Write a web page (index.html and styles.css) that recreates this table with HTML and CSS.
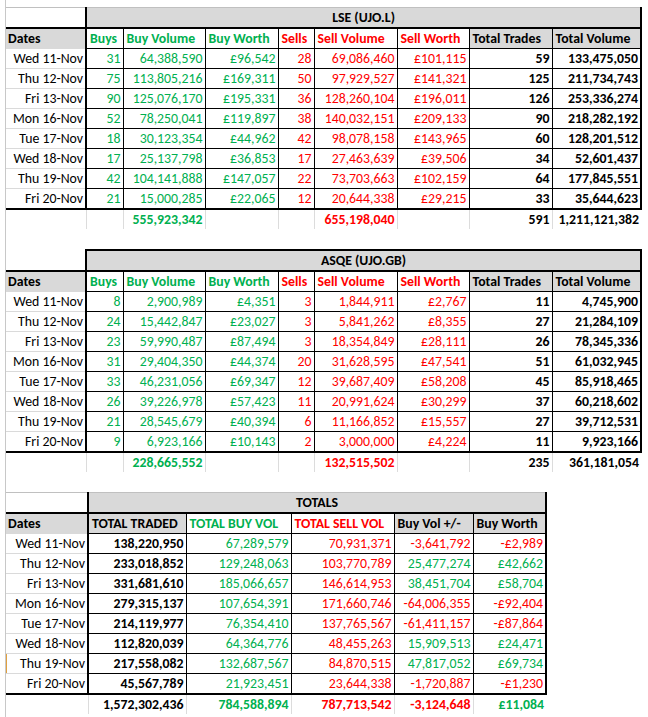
FILE: index.html
```html
<!DOCTYPE html>
<html lang="en">
<head>
    <meta charset="UTF-8">
    <title>UJO trades</title>
    <link rel="stylesheet" href="styles.css">
</head>
<body>
<div class="sheet">

    <table class="grid market light-top">
        <colgroup>
            <col class="c-date"><col class="c-buys"><col class="c-bvol"><col class="c-bworth"><col class="c-sells">
            <col class="c-svol"><col class="c-sworth"><col class="c-trades"><col class="c-tvol">
        </colgroup>
        <tr class="title"><td class="corner"></td><th colspan="8">LSE (UJO.L)</th></tr>
        <tr class="head">
            <th class="date-head">Dates</th><th class="g first">Buys</th><th class="g">Buy Volume</th><th class="g">Buy Worth</th>
            <th class="r">Sells</th><th class="r">Sell Volume</th><th class="r">Sell Worth</th><th class="grey">Total Trades</th><th class="grey last">Total Volume</th>
        </tr>
        <tr><td class="date">Wed 11-Nov</td><td class="g first">31</td><td class="g">64,388,590</td><td class="g">£96,542</td><td class="r">28</td><td class="r">69,086,460</td><td class="r">£101,115</td><td class="b">59</td><td class="b last">133,475,050</td></tr>
        <tr><td class="date">Thu 12-Nov</td><td class="g first">75</td><td class="g">113,805,216</td><td class="g">£169,311</td><td class="r">50</td><td class="r">97,929,527</td><td class="r">£141,321</td><td class="b">125</td><td class="b last">211,734,743</td></tr>
        <tr><td class="date">Fri 13-Nov</td><td class="g first">90</td><td class="g">125,076,170</td><td class="g">£195,331</td><td class="r">36</td><td class="r">128,260,104</td><td class="r">£196,011</td><td class="b">126</td><td class="b last">253,336,274</td></tr>
        <tr><td class="date">Mon 16-Nov</td><td class="g first">52</td><td class="g">78,250,041</td><td class="g">£119,897</td><td class="r">38</td><td class="r">140,032,151</td><td class="r">£209,133</td><td class="b">90</td><td class="b last">218,282,192</td></tr>
        <tr><td class="date">Tue 17-Nov</td><td class="g first">18</td><td class="g">30,123,354</td><td class="g">£44,962</td><td class="r">42</td><td class="r">98,078,158</td><td class="r">£143,965</td><td class="b">60</td><td class="b last">128,201,512</td></tr>
        <tr><td class="date">Wed 18-Nov</td><td class="g first">17</td><td class="g">25,137,798</td><td class="g">£36,853</td><td class="r">17</td><td class="r">27,463,639</td><td class="r">£39,506</td><td class="b">34</td><td class="b last">52,601,437</td></tr>
        <tr><td class="date">Thu 19-Nov</td><td class="g first">42</td><td class="g">104,141,888</td><td class="g">£147,057</td><td class="r">22</td><td class="r">73,703,663</td><td class="r">£102,159</td><td class="b">64</td><td class="b last">177,845,551</td></tr>
        <tr class="end"><td class="date">Fri 20-Nov</td><td class="g first">21</td><td class="g">15,000,285</td><td class="g">£22,065</td><td class="r">12</td><td class="r">20,644,338</td><td class="r">£29,215</td><td class="b">33</td><td class="b last">35,644,623</td></tr>
        <tr class="sum"><td></td><td></td><td class="g">555,923,342</td><td></td><td></td><td class="r">655,198,040</td><td></td><td>591</td><td>1,211,121,382</td></tr>
    </table>

    <table class="grid market">
        <colgroup>
            <col class="c-date"><col class="c-buys"><col class="c-bvol"><col class="c-bworth"><col class="c-sells">
            <col class="c-svol"><col class="c-sworth"><col class="c-trades"><col class="c-tvol">
        </colgroup>
        <tr class="title"><td class="corner"></td><th colspan="8">ASQE (UJO.GB)</th></tr>
        <tr class="head">
            <th class="date-head">Dates</th><th class="g first">Buys</th><th class="g">Buy Volume</th><th class="g">Buy Worth</th>
            <th class="r">Sells</th><th class="r">Sell Volume</th><th class="r">Sell Worth</th><th class="grey">Total Trades</th><th class="grey last">Total Volume</th>
        </tr>
        <tr><td class="date">Wed 11-Nov</td><td class="g first">8</td><td class="g">2,900,989</td><td class="g">£4,351</td><td class="r">3</td><td class="r">1,844,911</td><td class="r">£2,767</td><td class="b">11</td><td class="b last">4,745,900</td></tr>
        <tr><td class="date">Thu 12-Nov</td><td class="g first">24</td><td class="g">15,442,847</td><td class="g">£23,027</td><td class="r">3</td><td class="r">5,841,262</td><td class="r">£8,355</td><td class="b">27</td><td class="b last">21,284,109</td></tr>
        <tr><td class="date">Fri 13-Nov</td><td class="g first">23</td><td class="g">59,990,487</td><td class="g">£87,494</td><td class="r">3</td><td class="r">18,354,849</td><td class="r">£28,111</td><td class="b">26</td><td class="b last">78,345,336</td></tr>
        <tr><td class="date">Mon 16-Nov</td><td class="g first">31</td><td class="g">29,404,350</td><td class="g">£44,374</td><td class="r">20</td><td class="r">31,628,595</td><td class="r">£47,541</td><td class="b">51</td><td class="b last">61,032,945</td></tr>
        <tr><td class="date">Tue 17-Nov</td><td class="g first">33</td><td class="g">46,231,056</td><td class="g">£69,347</td><td class="r">12</td><td class="r">39,687,409</td><td class="r">£58,208</td><td class="b">45</td><td class="b last">85,918,465</td></tr>
        <tr><td class="date">Wed 18-Nov</td><td class="g first">26</td><td class="g">39,226,978</td><td class="g">£57,423</td><td class="r">11</td><td class="r">20,991,624</td><td class="r">£30,299</td><td class="b">37</td><td class="b last">60,218,602</td></tr>
        <tr><td class="date">Thu 19-Nov</td><td class="g first">21</td><td class="g">28,545,679</td><td class="g">£40,394</td><td class="r">6</td><td class="r">11,166,852</td><td class="r">£15,557</td><td class="b">27</td><td class="b last">39,712,531</td></tr>
        <tr class="end"><td class="date">Fri 20-Nov</td><td class="g first">9</td><td class="g">6,923,166</td><td class="g">£10,143</td><td class="r">2</td><td class="r">3,000,000</td><td class="r">£4,224</td><td class="b">11</td><td class="b last">9,923,166</td></tr>
        <tr class="sum"><td></td><td></td><td class="g">228,665,552</td><td></td><td></td><td class="r">132,515,502</td><td></td><td>235</td><td>361,181,054</td></tr>
    </table>

    <table class="grid totals light-top">
        <colgroup>
            <col class="t-date"><col class="t-traded"><col class="t-buy"><col class="t-sell"><col class="t-diff"><col class="t-worth">
        </colgroup>
        <tr class="title"><td class="corner"></td><th colspan="5">TOTALS</th></tr>
        <tr class="head">
            <th class="date-head">Dates</th><th class="grey first">TOTAL TRADED</th><th class="g">TOTAL BUY VOL</th><th class="r">TOTAL SELL VOL</th><th class="grey">Buy Vol +/-</th><th class="grey last">Buy Worth</th>
        </tr>
        <tr><td class="date">Wed 11-Nov</td><td class="b first">138,220,950</td><td class="g">67,289,579</td><td class="r">70,931,371</td><td class="r">-3,641,792</td><td class="r last">-£2,989</td></tr>
        <tr><td class="date">Thu 12-Nov</td><td class="b first">233,018,852</td><td class="g">129,248,063</td><td class="r">103,770,789</td><td class="g">25,477,274</td><td class="g last">£42,662</td></tr>
        <tr><td class="date">Fri 13-Nov</td><td class="b first">331,681,610</td><td class="g">185,066,657</td><td class="r">146,614,953</td><td class="g">38,451,704</td><td class="g last">£58,704</td></tr>
        <tr><td class="date">Mon 16-Nov</td><td class="b first">279,315,137</td><td class="g">107,654,391</td><td class="r">171,660,746</td><td class="r">-64,006,355</td><td class="r last">-£92,404</td></tr>
        <tr><td class="date">Tue 17-Nov</td><td class="b first">214,119,977</td><td class="g">76,354,410</td><td class="r">137,765,567</td><td class="r">-61,411,157</td><td class="r last">-£87,864</td></tr>
        <tr><td class="date">Wed 18-Nov</td><td class="b first">112,820,039</td><td class="g">64,364,776</td><td class="r">48,455,263</td><td class="g">15,909,513</td><td class="g last">£24,471</td></tr>
        <tr><td class="date picked">Thu 19-Nov</td><td class="b first">217,558,082</td><td class="g">132,687,567</td><td class="r">84,870,515</td><td class="g">47,817,052</td><td class="g last">£69,734</td></tr>
        <tr class="end"><td class="date">Fri 20-Nov</td><td class="b first">45,567,789</td><td class="g">21,923,451</td><td class="r">23,644,338</td><td class="r">-1,720,887</td><td class="r last">-£1,230</td></tr>
        <tr class="sum"><td></td><td>1,572,302,436</td><td class="g">784,588,894</td><td class="r">787,713,542</td><td class="r">-3,124,648</td><td class="g">£11,084</td></tr>
    </table>

</div>
</body>
</html>
```

FILE: styles.css
```css
body {
    margin: 0;
    background: #fff;
    font-family: Calibri, Carlito, Lato, "Liberation Sans", sans-serif;
    font-size: 13.8px;
    color: #000;
}

.sheet {
    margin-left: 5px;
    padding-top: 7px;
    height: 710px;
    border-left: 1px solid #c8c8c8;
    display: flex;
    flex-direction: column;
    gap: 20px;
}

.grid {
    border-collapse: collapse;
    table-layout: fixed;
}
.market { width: 635px; }
.totals { width: 540px; }

.c-date { width: 80px; }
.c-buys { width: 37px; }
.c-bvol { width: 82px; }
.c-bworth { width: 73px; }
.c-sells { width: 36px; }
.c-svol { width: 83px; }
.c-sworth { width: 72px; }
.c-trades { width: 83px; }
.c-tvol { width: 89px; }

.t-date { width: 82px; }
.t-traded { width: 98px; }
.t-buy { width: 105px; }
.t-sell { width: 103px; }
.t-diff { width: 79px; }
.t-worth { width: 73px; }

.grid td, .grid th {
    height: 18px;
    padding: 1px 2px 0 2px;
    line-height: 18px;
    border: 1px solid #000;
    white-space: nowrap;
    overflow: hidden;
    text-align: right;
    font-weight: normal;
    vertical-align: bottom;
}

/* title band */
.grid .title th {
    background: #d9d9d9;
    text-align: center;
    font-weight: bold;
    border: 2px solid #000;
}
.light-top .title th { border-top: 1px solid #c0c0c0; }
.grid .title .corner {
    border: none;
    border-bottom: 2px solid #000;
}
.light-top .title .corner { border-top: 1px solid #c0c0c0; }

/* column heads */
.grid .head th {
    text-align: left;
    font-weight: bold;
    padding-left: 3px;
}
.grid .head .date-head {
    background: #d9d9d9;
    border-left: none;
    border-bottom: 1px solid #d9d9d9;
    padding-left: 2px;
}
.grid .head .grey { background: #d9d9d9; }

/* body */
.grid .date {
    border: none;
    border-bottom: 1px solid #dadada;
    border-right: 2px solid #000;
}
.grid .date.picked { box-shadow: inset 1px 0 0 #e0a040; }
.grid .first { border-left: 2px solid #000; }
.grid .last { border-right: 2px solid #000; }
.grid .end td { border-bottom: 2px solid #000; }
.grid .b { font-weight: bold; }

.grid .sum td {
    font-weight: bold;
    border: none;
    border-top: 2px solid #000;
    border-right: 1px solid #dcdcdc;
}
.grid .sum td:last-child { border-right: none; }

.g { color: #00b050; }
.r { color: #ff0000; }
```
